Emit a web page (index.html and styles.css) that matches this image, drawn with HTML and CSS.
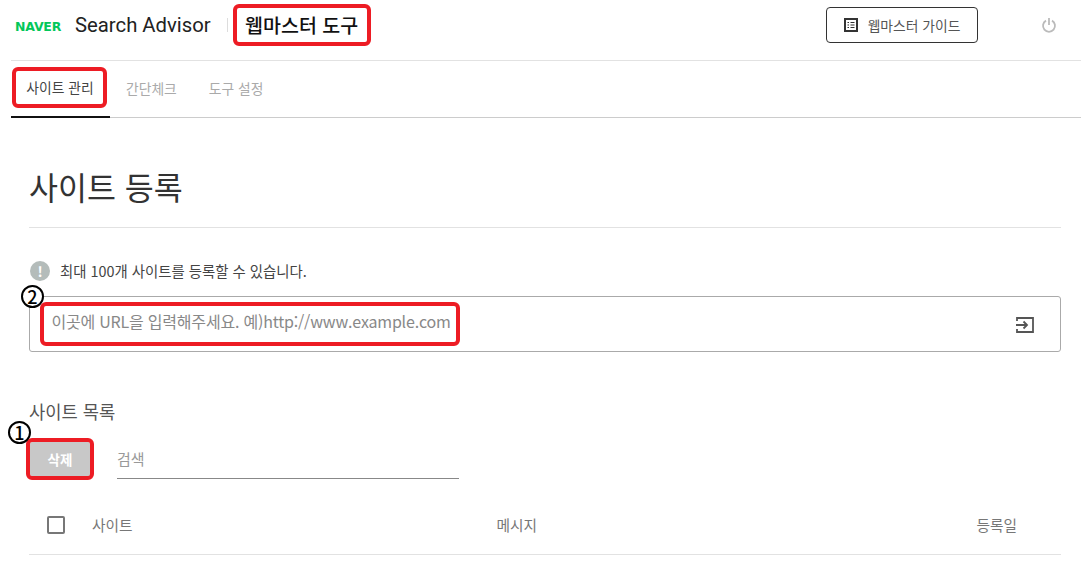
FILE: index.html
```html
<!DOCTYPE html>
<html lang="ko">

<head>
  <meta charset="UTF-8">
  <meta name="viewport" content="width=device-width, initial-scale=1.0">
  <title>웹마스터 도구</title>
  <link rel="stylesheet" href="styles.css">
</head>

<body>
  <header class="topbar">
    <div class="brand">
      <span class="naver">NAVER</span>
      <span class="product">Search Advisor</span>
      <span class="brand-sep"></span>
      <span class="page-name mark">웹마스터 도구</span>
    </div>
    <a class="guide-btn" href="#">
      <svg class="guide-icon" width="14" height="14" viewBox="0 0 14 14">
        <rect x="1" y="1" width="12" height="12" fill="none" stroke="#333" stroke-width="2" />
        <path d="M3.5 4.5h1.500M6.500 4.500h4M3.500 7h1.500M6.500 7h4M3.500 9.500h1.500M6.500 9.500h4" stroke="#333" stroke-width="1.2" />
      </svg>
      웹마스터 가이드
    </a>
    <svg class="power-icon" width="16" height="16" viewBox="0 0 16 16">
      <path d="M5 3.600A6 6 0 1 0 11 3.600" fill="none" stroke="#bbb" stroke-width="1.800" />
      <path d="M8 1v7" stroke="#bbb" stroke-width="1.800" />
    </svg>
  </header>

  <nav class="tabs">
    <a class="tab active" href="#"><span class="mark tab-mark">사이트 관리</span></a>
    <a class="tab" href="#">간단체크</a>
    <a class="tab" href="#">도구 설정</a>
  </nav>

  <main class="content">
    <h1>사이트 등록</h1>

    <p class="notice"><span class="notice-icon">!</span>최대 100개 사이트를 등록할 수 있습니다.</p>

    <div class="url-box">
      <span class="step step-url">2</span>
      <span class="url-hint mark">이곳에 URL을 입력해주세요. 예)http://www.example.com</span>
      <svg class="enter-icon" width="20" height="18" viewBox="0 0 20 18">
        <path d="M2 5V2h16v14H2v-3" fill="none" stroke="#555" stroke-width="1.800" />
        <path d="M1 9h11M8.500 5.500 12 9l-3.500 3.500" fill="none" stroke="#555" stroke-width="1.800" />
      </svg>
    </div>

    <h2>사이트 목록</h2>

    <div class="list-tools">
      <span class="step step-del">1</span>
      <button class="del-btn mark">삭제</button>
      <div class="search">검색</div>
    </div>

    <div class="list-head">
      <span class="check"></span>
      <span class="col-site">사이트</span>
      <span class="col-msg">메시지</span>
      <span class="col-date">등록일</span>
    </div>
  </main>
</body>

</html>
```
FILE: styles.css
```css
/* General Reset */
body,
html {
  margin: 0;
  padding: 0;
  background: #fff;
  font-family: 'Noto Sans CJK KR', 'Noto Sans', sans-serif;
  overflow: hidden;
}

/* Red annotation boxes */
.mark {
  outline: 4px solid #ed1c24;
  border-radius: 2px;
}

.step {
  position: absolute;
  width: 19px;
  height: 19px;
  border: 2px solid #000;
  border-radius: 50%;
  background: #fff;
  color: #000;
  font-size: 18px;
  font-weight: 500;
  line-height: 19px;
  text-align: center;
}

/* Top bar */
.topbar {
  display: flex;
  align-items: center;
  height: 60px;
  margin-left: 11px;
  padding: 0 24px 0 4px;
  border-bottom: 1px solid #e2e2e2;
}

.brand {
  display: flex;
  align-items: center;
  flex: 1;
  padding-bottom: 10px;
}

.naver {
  width: 47px;
  padding-top: 3px;
  color: #03c75a;
  font-family: 'DejaVu Sans', sans-serif;
  font-size: 12.5px;
  font-weight: 700;
  letter-spacing: -0.2px;
}

.product {
  margin-left: 13px;
  color: #222;
  font-family: 'Roboto', sans-serif;
  font-size: 20.3px;
}

.brand-sep {
  width: 1px;
  height: 14px;
  margin-left: 16px;
  background: #ddd;
}

.page-name {
  display: flex;
  align-items: center;
  justify-content: center;
  box-sizing: border-box;
  width: 130px;
  height: 34px;
  margin-left: 9px;
  padding-bottom: 2px;
  color: #111;
  font-size: 19.500px;
  font-weight: 500;
}

.guide-btn {
  display: flex;
  align-items: center;
  justify-content: center;
  gap: 10px;
  box-sizing: border-box;
  width: 152px;
  height: 36px;
  margin-right: 63px;
  margin-bottom: 10px;
  border: 1px solid #333;
  border-radius: 4px;
  color: #555;
  font-size: 13.800px;
  text-decoration: none;
}

.power-icon {
  margin-bottom: 10px;
}

/* Tabs */
.tabs {
  display: flex;
  height: 56px;
  margin-left: 11px;
  border-bottom: 1px solid #ccc;
}

.tab {
  display: flex;
  align-items: center;
  justify-content: center;
  box-sizing: border-box;
  height: 57px;
  padding: 0 16px 4px;
  color: #aaa;
  font-size: 13.800px;
  text-decoration: none;
}

.tab.active {
  width: 99px;
  padding: 0;
  border-bottom: 2px solid #111;
  color: #444;
}

.tab-mark {
  display: flex;
  align-items: center;
  justify-content: center;
  box-sizing: border-box;
  width: 87px;
  height: 33px;
  margin-left: -3px;
  margin-bottom: 2px;
  padding: 0 0 2px 2px;
}

/* Content */
.content {
  margin: 0 20px 0 29px;
}

h1 {
  height: 110px;
  margin: 0;
  border-bottom: 1px solid #e2e2e2;
  box-sizing: border-box;
  color: #333;
  font-size: 31.500px;
  font-weight: 400;
  line-height: 137px;
}

.notice {
  display: flex;
  align-items: center;
  gap: 10px;
  height: 22px;
  margin: 32px 0 0 1px;
  color: #444;
  font-size: 14.400px;
  line-height: 20px;
}

.notice-icon {
  width: 20px;
  height: 20px;
  border-radius: 50%;
  background: #b4bcba;
  color: #fff;
  font-size: 14px;
  font-weight: 700;
  line-height: 20px;
  text-align: center;
}

.url-box {
  position: relative;
  display: flex;
  align-items: center;
  justify-content: space-between;
  box-sizing: border-box;
  height: 56px;
  margin-top: 14px;
  padding: 0 25px 0 14px;
  border: 1px solid #aaa;
  border-radius: 3px;
}

.step-url {
  top: -12px;
  left: -9px;
}

.enter-icon {
  margin-top: 1px;
}

.url-hint {
  display: flex;
  align-items: center;
  justify-content: center;
  box-sizing: border-box;
  width: 412px;
  height: 36px;
  padding: 0 0 6px 2px;
  color: #888;
  font-size: 16px;
  letter-spacing: -0.2px;
  white-space: nowrap;
}

h2 {
  margin: 47px 0 0;
  color: #555;
  font-size: 17.700px;
  font-weight: 400;
  line-height: 24px;
}

.list-tools {
  position: relative;
  display: flex;
  align-items: flex-start;
  gap: 27px;
  margin-top: 19px;
}

.step-del {
  top: -21px;
  left: -21px;
}

.del-btn {
  width: 60px;
  height: 34px;
  margin-left: 1px;
  border: 0;
  background: #c8c8c8;
  color: #fff;
  font-family: inherit;
  font-size: 13.500px;
  font-weight: 700;
}

.search {
  box-sizing: border-box;
  width: 342px;
  height: 37px;
  border-bottom: 1px solid #888;
  color: #999;
  font-size: 15px;
  line-height: 34px;
}

.list-head {
  display: flex;
  align-items: center;
  box-sizing: border-box;
  height: 76px;
  margin-top: 0;
  padding: 15px 0 0 18px;
  border-bottom: 1px solid #e2e2e2;
  color: #777;
  font-size: 14.700px;
}

.check {
  box-sizing: border-box;
  width: 18px;
  height: 18px;
  margin-top: 1px;
  border: 2px solid #777;
  border-radius: 2px;
}

.col-site {
  margin-left: 27px;
}

.col-msg {
  margin-left: 364px;
}

.col-date {
  margin-left: auto;
  margin-right: 44px;
}
```
